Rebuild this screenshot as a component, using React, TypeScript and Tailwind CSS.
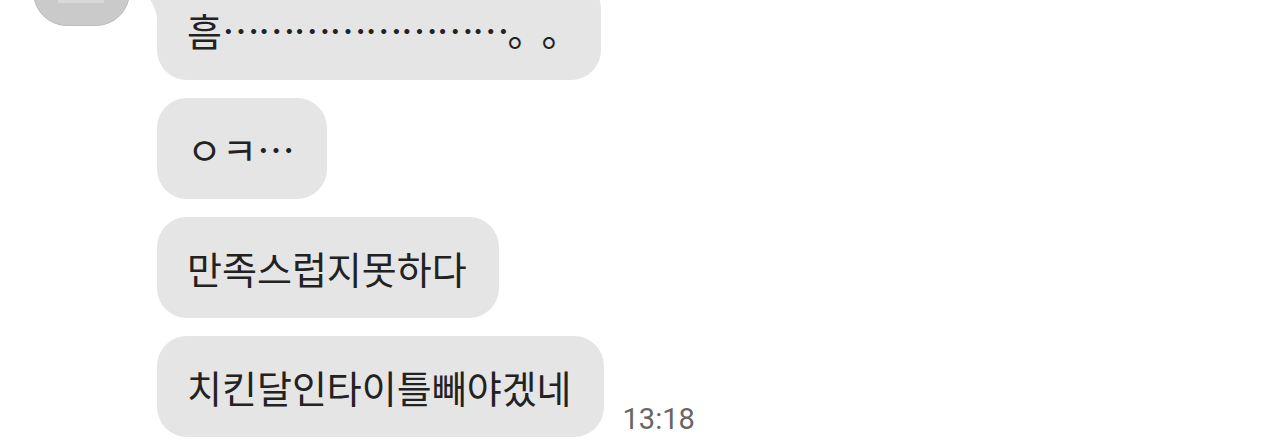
import React from 'react'

type Message = {
  id: number
  text: React.ReactNode
}

const messages: Message[] = [
  {
    id: 1,
    text: (
      <>
        흠<span className="tracking-[-2.3px]">{'…'.repeat(8)}</span>
        <span className="tracking-[15px] -mr-[26px]">。。</span>
      </>
    ),
  },
  { id: 2, text: 'ㅇㅋ…' },
  { id: 3, text: '만족스럽지못하다' },
  { id: 4, text: '치킨달인타이틀빼야겠네' },
]

const font = { fontFamily: '"Noto Sans CJK KR", "Noto Sans", sans-serif' }

export default function App() {
  return (
    <div className="w-[1284px] h-[442px] overflow-hidden bg-white" style={font}>
      <div className="flex -mt-[21px]">
        {/* avatar column */}
        <div className="w-[157px] shrink-0 pl-[33px]">
          <div className="relative w-[97px] h-[97px] -mt-[50px] rounded-[34px] bg-[#cacaca] border border-[#bdbdbd]">
            <div className="absolute left-[24px] bottom-[22px] w-[46px] h-[3px] bg-[#d9d9d9]" />
          </div>
        </div>

        <div className="flex flex-col gap-[18px]">
          {messages.map((m, i) => (
            <div key={m.id} className="flex items-end">
              <div className="relative">
                {i === 0 && (
                  <svg className="absolute -left-[12px] top-0" width="24" height="40" viewBox="0 0 24 40">
                    <path d="M0 0 H24 V40 H12 C12 32 8 26 2 14 Z" fill="#e5e5e5" />
                  </svg>
                )}
                <div className="relative h-[101px] flex items-center pl-[30px] pr-[32px] rounded-[30px] bg-[#e5e5e5] text-[#222] text-[38px] leading-none whitespace-nowrap">
                  {m.text}
                </div>
              </div>
              {i === messages.length - 1 && (
                <span
                  className="ml-[19px] mb-[3px] text-[29px] leading-none text-[#666]"
                  style={{ fontFamily: 'Roboto, "Noto Sans", sans-serif' }}
                >
                  13:18
                </span>
              )}
            </div>
          ))}
        </div>
      </div>
    </div>
  )
}
